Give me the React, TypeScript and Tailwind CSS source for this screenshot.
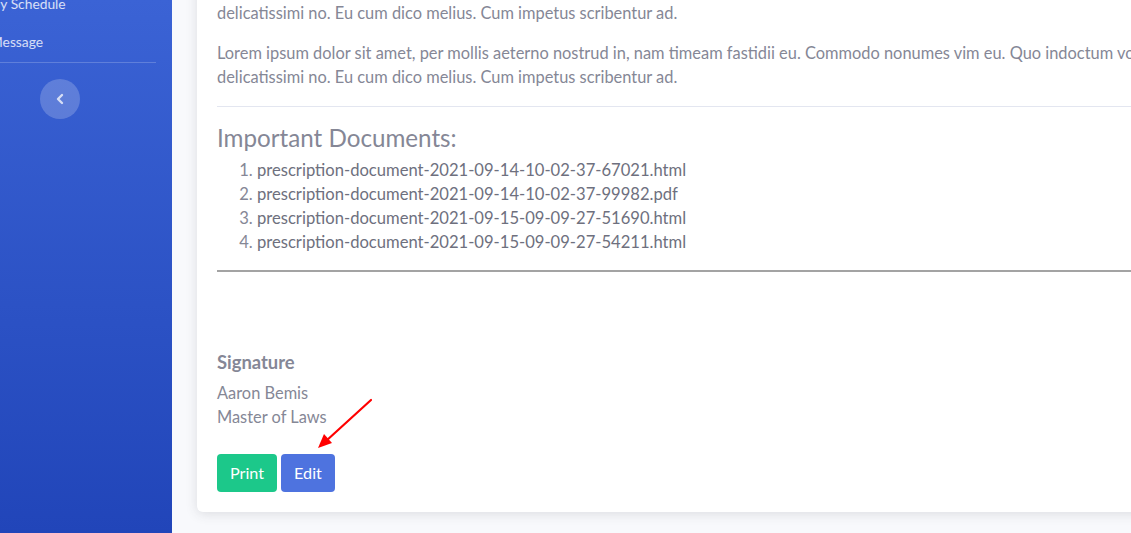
import React from "react";

export default function App() {
  const docs = [
    "prescription-document-2021-09-14-10-02-37-67021.html",
    "prescription-document-2021-09-14-10-02-37-99982.pdf",
    "prescription-document-2021-09-15-09-09-27-51690.html",
    "prescription-document-2021-09-15-09-09-27-54211.html",
  ];
  return (
    <div className="relative flex w-[1131px] h-[533px] overflow-hidden bg-[#f8f9fc] font-['Lato','Noto_Sans',sans-serif]">
      {/* Sidebar */}
      <div className="w-[172px] shrink-0 h-full bg-gradient-to-b from-[#3b63d5] to-[#2145b9] flex flex-col overflow-hidden">
        <div className="h-[24px] flex items-center mt-[-8px] ml-[-38px] whitespace-nowrap text-[13.8px] text-white/80">
          Weekly Schedule
        </div>
        <div className="h-[24px] mt-[14px] flex items-center ml-[-10px] whitespace-nowrap text-[13.8px] text-white/80">
          Message
        </div>
        <div className="mt-[8px] w-[156px] h-px bg-white/20" />
        <div className="flex justify-center w-[120px] mt-[16px]">
          <div className="w-[40px] h-[40px] rounded-full bg-white/20 flex items-center justify-center">
            <svg width="10" height="12" viewBox="0 0 10 12">
              <path d="M7 2 L3 6 L7 10" stroke="rgba(255,255,255,0.75)" strokeWidth="2.4" fill="none" strokeLinecap="round" strokeLinejoin="round" />
            </svg>
          </div>
        </div>
      </div>

      {/* Main */}
      <div className="flex-1 pl-[25px] overflow-hidden">
        <div className="w-[1200px] mt-[-38px] bg-white rounded-[6px] shadow-[0_2px_12px_rgba(58,59,69,0.15)] px-[20px] pt-[15px] pb-[20px] flex flex-col text-[#858796] text-[16.4px] leading-[24px]">
          <p className="whitespace-nowrap">
            Lorem ipsum dolor sit amet, per mollis aeterno nostrud in, nam timeam fastidii eu. Commodo nonumes vim eu. Quo indoctum voluptatibus ut, vix et
            <br />
            delicatissimi no. Eu cum dico melius. Cum impetus scribentur ad.
          </p>
          <p className="whitespace-nowrap mt-[16px]">
            Lorem ipsum dolor sit amet, per mollis aeterno nostrud in, nam timeam fastidii eu. Commodo nonumes vim eu. Quo indoctum voluptatibus ut, vix et
            <br />
            delicatissimi no. Eu cum dico melius. Cum impetus scribentur ad.
          </p>
          <div className="mt-[17px] h-px bg-[#e3e6f0]" />
          <h4 className="mt-[16px] text-[24.2px] leading-[29px] text-[#858796]">Important Documents:</h4>
          <ol className="mt-[6px] pl-[40px] list-decimal text-[#858796] text-[16.6px]">
            {docs.map((d) => (
              <li key={d}>
                <span className="text-[#6e707e]">{d}</span>
              </li>
            ))}
          </ol>
          <div className="mt-[16px] h-[2px] bg-[#a3a3a3]" />
          <div className="mt-[78px] text-[18.4px] leading-[24px] font-bold text-[#858796]">Signature</div>
          <div className="mt-[7px]">Aaron Bemis</div>
          <div>Master of Laws</div>
          <div className="mt-[25px] flex gap-[4px]">
            <button className="h-[38px] px-[13px] rounded-[4px] bg-[#1cc88a] text-white text-[16.2px]">Print</button>
            <button className="h-[38px] px-[13px] rounded-[4px] bg-[#4e73df] text-white text-[16.2px]">Edit</button>
          </div>
        </div>
      </div>

      {/* red arrow annotation */}
      <svg className="absolute left-[310px] top-[395px] pointer-events-none" width="70" height="60" viewBox="310 395 70 60">
        <line x1="371" y1="400" x2="326" y2="441" stroke="#ff0000" strokeWidth="2.2" strokeLinecap="round" />
        <path d="M318 448 L324 434 L332 443 Z" fill="#ff0000" />
      </svg>
    </div>
  );
}
